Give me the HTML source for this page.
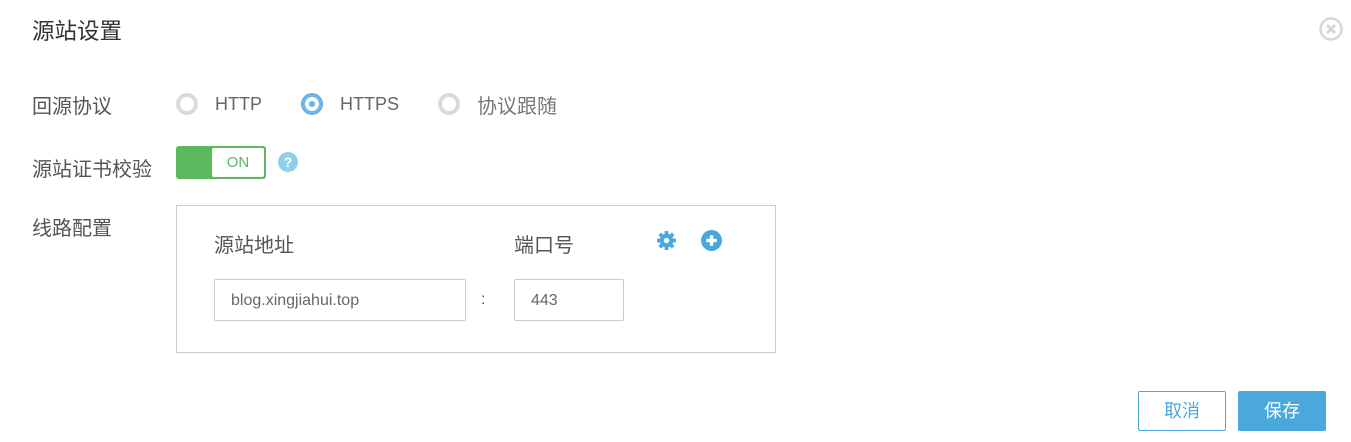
<!DOCTYPE html>
<html><head><meta charset="utf-8"><style>
body{margin:0;width:1351px;height:442px;background:#fff;font-family:"Liberation Sans","Noto Sans CJK SC",sans-serif;color:#555;position:relative;overflow:hidden}
.a{position:absolute;white-space:nowrap}
.r{position:absolute;width:14px;height:14px;border:4px solid #d8dadd;border-radius:50%;box-sizing:content-box}
.inp{position:absolute;border:1px solid #ccc;border-radius:2px;height:42px;box-sizing:border-box;font-size:16px;color:#666;padding:0 0 0 16px;line-height:42px}
</style></head><body>
<div class="a" style="left:32px;top:14px;font-size:22.5px;color:#333">源站设置</div>
<svg class="a" style="left:1318px;top:16px" width="26" height="26" viewBox="0 0 26 26"><circle cx="13" cy="13" r="10.5" fill="none" stroke="#d5d7da" stroke-width="2.5"/><path d="M9 9L17 17M17 9L9 17" stroke="#d5d7da" stroke-width="3"/></svg>
<div class="a" style="left:32px;top:90px;font-size:20px">回源协议</div>
<div class="r" style="left:176px;top:93px"></div>
<div class="a" style="left:215px;top:94px;font-size:18px;color:#666">HTTP</div>
<div class="r" style="left:301px;top:93px;border-color:#6ab5e6"><div style="width:6px;height:6px;background:#6ab5e6;border-radius:50%;margin:4px"></div></div>
<div class="a" style="left:340px;top:94px;font-size:18px;color:#666">HTTPS</div>
<div class="r" style="left:438px;top:93px"></div>
<div class="a" style="left:477px;top:90px;font-size:20px;color:#777">协议跟随</div>
<div class="a" style="left:32px;top:153px;font-size:20px">源站证书校验</div>
<div class="a" style="left:176px;top:146px;width:90px;height:33px;background:#5cb85c;border-radius:3px"></div>
<div class="a" style="left:212px;top:148px;width:52px;height:29px;background:#fff;border-radius:2px;color:#5cb85c;font-size:15px;text-align:center;line-height:29px">ON</div>
<svg class="a" style="left:278px;top:152px" width="20" height="20" viewBox="0 0 20 20"><circle cx="10" cy="10" r="10" fill="#8ed0ea"/><text x="10" y="15" font-size="14" font-weight="bold" fill="#fff" text-anchor="middle" font-family="Liberation Sans">?</text></svg>
<div class="a" style="left:32px;top:212px;font-size:20px">线路配置</div>
<div class="a" style="left:176px;top:205px;width:598px;height:146px;border:1px solid #ccc"></div>
<div class="a" style="left:214px;top:229px;font-size:20px">源站地址</div>
<div class="a" style="left:514px;top:229px;font-size:20px">端口号</div>
<svg class="a" style="left:656px;top:230px" width="21" height="21" viewBox="0 0 20 20"><g fill="#4aa8dc"><circle cx="10" cy="10" r="6.5"/><g stroke="#4aa8dc" stroke-width="3.5"><path d="M10 1v18M1 10h18M3.6 3.6l12.8 12.8M16.4 3.6L3.6 16.4"/></g></g><circle cx="10" cy="10" r="2.6" fill="#fff"/></svg>
<svg class="a" style="left:701px;top:230px" width="21" height="21" viewBox="0 0 20 20"><circle cx="10" cy="10" r="10" fill="#4aa8dc"/><path d="M10 5v10M5 10h10" stroke="#fff" stroke-width="3.2"/></svg>
<div class="inp" style="left:214px;top:279px;width:252px">blog.xingjiahui.top</div>
<div class="a" style="left:481px;top:291px;font-size:16px">:</div>
<div class="inp" style="left:514px;top:279px;width:110px">443</div>
<div class="a" style="left:1138px;top:391px;width:88px;height:40px;border:1px solid #4aa8dc;box-sizing:border-box;border-radius:2px;color:#4aa8dc;font-size:18px;text-align:center;line-height:38px">取消</div>
<div class="a" style="left:1238px;top:391px;width:88px;height:40px;background:#4aa8dc;border-radius:2px;color:#fff;font-size:18px;text-align:center;line-height:40px">保存</div>
</body></html>
